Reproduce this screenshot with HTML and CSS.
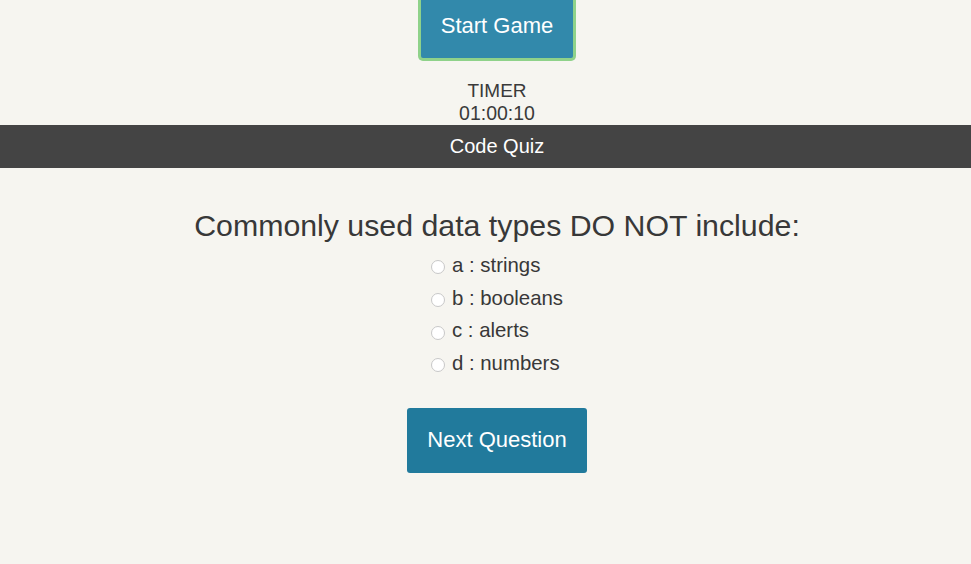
FILE: index.html
```html
<!DOCTYPE html>
<html lang="en">
<head>
<meta charset="utf-8">
<title>Code Quiz</title>
<link rel="stylesheet" href="styles.css">
</head>
<body>
<div class="top">
  <button class="start">Start Game</button>
  <div class="timer">
    <div>TIMER</div>
    <div class="digits">01:00:10</div>
  </div>
</div>
<header class="bar">Code Quiz</header>
<main class="quiz">
  <h2 class="question">Commonly used data types DO NOT include:</h2>
  <ul class="options">
    <li><label><span class="radio"></span>a : strings</label></li>
    <li><label><span class="radio"></span>b : booleans</label></li>
    <li><label><span class="radio"></span>c : alerts</label></li>
    <li><label><span class="radio"></span>d : numbers</label></li>
  </ul>
  <button class="next">Next Question</button>
</main>
</body>
</html>
```
FILE: styles.css
```css
html, body {
  margin: 0;
  padding: 0;
  background: #f6f5f0;
  font-family: "Liberation Sans", Arial, Helvetica, sans-serif;
  color: #383838;
}
.top, .bar, .quiz {
  padding-left: 23px;
  box-sizing: border-box;
}
.top {
  display: flex;
  flex-direction: column;
  align-items: center;
  margin-top: -6px;
}
.start {
  width: 152px;
  height: 64px;
  background: #3289ab;
  color: #fff;
  border: none;
  border-radius: 2px;
  box-shadow: 0 0 0 3px #8fd28a;
  font-family: inherit;
  font-size: 22px;
  padding: 0;
  margin: 0;
}
.timer {
  margin-top: 21px;
  text-align: center;
  font-size: 19px;
  line-height: 23px;
  color: #3a3a3a;
}
.timer .digits {
  font-size: 19.5px;
}
.bar {
  background: #444;
  color: #fff;
  height: 43px;
  display: flex;
  align-items: center;
  justify-content: center;
  font-size: 20px;
}
.quiz {
  display: flex;
  flex-direction: column;
  align-items: center;
}
.question {
  margin: 38px 0 0;
  font-weight: normal;
  font-size: 30.3px;
  line-height: 40px;
  color: #383838;
}
.options {
  list-style: none;
  margin: 3px 0 0;
  padding: 0;
  display: flex;
  flex-direction: column;
  align-items: flex-start;
  font-size: 20.4px;
  line-height: 32.7px;
  color: #383838;
}
.options label {
  display: flex;
  align-items: center;
}
.radio {
  width: 12px;
  height: 12px;
  border: 1px solid #c8c8c8;
  border-radius: 50%;
  background: #fff;
  margin-right: 7px;
  margin-top: 4px;
}
.next {
  margin-top: 28px;
  width: 180px;
  height: 65px;
  background: #217a9c;
  color: #fff;
  border: none;
  border-radius: 3px;
  font-family: inherit;
  font-size: 22px;
  padding: 0;
}
```
